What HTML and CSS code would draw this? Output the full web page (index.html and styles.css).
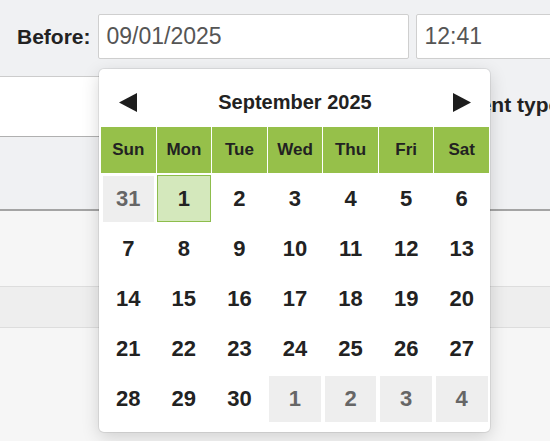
FILE: index.html
```html
<!DOCTYPE html>
<html>
<head>
<meta charset="utf-8">
<link rel="stylesheet" href="styles.css">
</head>
<body>
<div class="page">
  <div class="toolbar">
    <label class="label">Before:</label>
    <div class="input date-input">09/01/2025</div>
    <div class="input time-input">12:41</div>
  </div>
  <div class="filters">
    <div class="filter-box"></div>
    <div class="label type-label">Event type:</div>
  </div>
  <div class="results">
    <div class="band"></div>
  </div>

  <div class="datepicker">
    <div class="dp-header">
      <svg class="arrow" width="18" height="19" viewBox="0 0 18 19"><polygon points="18,0 18,19 0,9.5" fill="#1d1d1d"/></svg>
      <div class="dp-title">September 2025</div>
      <svg class="arrow" width="18" height="19" viewBox="0 0 18 19"><polygon points="0,0 0,19 18,9.5" fill="#1d1d1d"/></svg>
    </div>
    <div class="dp-weekdays">
      <div>Sun</div><div>Mon</div><div>Tue</div><div>Wed</div><div>Thu</div><div>Fri</div><div>Sat</div>
    </div>
    <div class="dp-days">
      <div class="day other">31</div>
      <div class="day selected">1</div>
      <div class="day">2</div>
      <div class="day">3</div>
      <div class="day">4</div>
      <div class="day">5</div>
      <div class="day">6</div>
      <div class="day">7</div>
      <div class="day">8</div>
      <div class="day">9</div>
      <div class="day">10</div>
      <div class="day">11</div>
      <div class="day">12</div>
      <div class="day">13</div>
      <div class="day">14</div>
      <div class="day">15</div>
      <div class="day">16</div>
      <div class="day">17</div>
      <div class="day">18</div>
      <div class="day">19</div>
      <div class="day">20</div>
      <div class="day">21</div>
      <div class="day">22</div>
      <div class="day">23</div>
      <div class="day">24</div>
      <div class="day">25</div>
      <div class="day">26</div>
      <div class="day">27</div>
      <div class="day">28</div>
      <div class="day">29</div>
      <div class="day">30</div>
      <div class="day other">1</div>
      <div class="day other">2</div>
      <div class="day other">3</div>
      <div class="day other">4</div>
    </div>
  </div>
</div>
</body>
</html>
```

FILE: styles.css
```css
* { box-sizing: border-box; }
html, body { margin: 0; padding: 0; }
body {
  width: 550px;
  height: 441px;
  overflow: hidden;
  background: #f0f1f3;
  font-family: "Liberation Sans", Arial, sans-serif;
  color: #222;
}
.page { position: relative; width: 550px; height: 441px; }

.toolbar {
  display: flex;
  align-items: center;
  padding: 14px 0 0 17px;
  gap: 7px;
  height: 59px;
  white-space: nowrap;
}
.label {
  font-weight: bold;
  font-size: 21px;
  color: #222;
}
.input {
  height: 45px;
  background: #fff;
  border: 1px solid #cfcfcf;
  border-radius: 2px;
  padding: 0 8px;
  display: flex;
  align-items: center;
  font-size: 23px;
  color: #555;
  flex-shrink: 0;
}
.date-input { width: 311px; }
.time-input { width: 160px; }

.filters {
  height: 152px;
  padding-top: 17px;
  border-bottom: 2px solid #a4a4a4;
  display: flex;
  align-items: flex-start;
  white-space: nowrap;
  overflow: hidden;
}
.filter-box {
  width: 440px;
  height: 61px;
  background: #fff;
  border-top: 1px solid #cccccc;
  border-bottom: 1px solid #b0b0b0;
  flex-shrink: 0;
}
.type-label {
  margin-left: 14px;
  margin-top: 17px;
}

.results {
  background: #f6f6f6;
  height: 240px;
  padding-top: 75px;
}
.band {
  height: 42px;
  background: #eeeeee;
  border-top: 1px solid #dddddd;
  border-bottom: 1px solid #dddddd;
}

.datepicker {
  position: absolute;
  left: 99px;
  top: 69px;
  width: 391px;
  height: 363px;
  background: #fff;
  border-radius: 5px;
  box-shadow: 0 0 0 1px rgba(0,0,0,0.07), 0 5px 18px rgba(0,0,0,0.16);
  padding: 0 1px 0 2px;
}
.dp-header {
  height: 58px;
  padding: 9px 18px 0 18px;
  display: flex;
  align-items: center;
  justify-content: space-between;
}
.dp-title {
  font-weight: bold;
  font-size: 20px;
  color: #222;
}
.arrow { display: block; }

.dp-weekdays {
  display: grid;
  grid-template-columns: repeat(7, 1fr);
  column-gap: 1px;
}
.dp-weekdays div {
  height: 46px;
  background: #96c04a;
  display: flex;
  align-items: center;
  justify-content: center;
  font-weight: bold;
  font-size: 17px;
  color: #222;
}
.dp-days {
  margin-top: 1px;
  display: grid;
  grid-template-columns: repeat(7, 1fr);
  grid-auto-rows: 50px;
  column-gap: 1px;
}
.day {
  margin: 2px 1.5px;
  display: flex;
  align-items: center;
  justify-content: center;
  font-weight: bold;
  font-size: 22px;
  color: #222;
}
.day.other {
  background: #eeeeee;
  color: #666;
}
.day.selected {
  margin: 1px 0 2px 0;
  background: #d4e8bc;
  border: 1px solid #8dbd4c;
}
```
